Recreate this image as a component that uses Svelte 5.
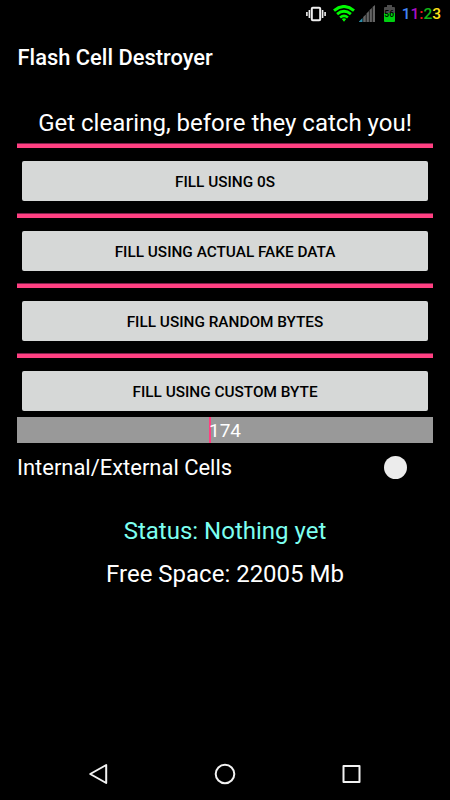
<script lang="ts">
	const modes = ['Fill using 0s', 'Fill using actual fake data', 'Fill using random bytes', 'Fill using custom byte'];

	const clock = [
		{ char: '1', color: '#4285f4' },
		{ char: '1', color: '#a80fc4' },
		{ char: ':', color: '#f01818' },
		{ char: '2', color: '#12b318' },
		{ char: '3', color: '#ffe21a' },
	];

	let customByte = $state(174);
	let external = $state(true);
	let status = $state('Nothing yet');
	let freeSpace = $state(22005);
</script>

<div class="screen">
	<div class="status-bar">
		<svg class="vibrate" width="20" height="16" viewBox="0 0 20 16" fill="none" stroke="#f0f0f0">
			<rect x="5.8" y="1.8" width="8.4" height="12.4" rx="1" stroke-width="2" />
			<path d="M3.4 4v8M16.6 4v8" stroke-width="1.6" />
			<path d="M.9 6v4M19.1 6v4" stroke-width="1.6" />
		</svg>
		<svg class="wifi" width="22" height="17" viewBox="0 0 22 17" fill="none" stroke="#00fa00" stroke-width="3">
			<path d="M1 5.6Q11-2.6 21 5.6" />
			<path d="M4.1 9.1Q11 3.4 17.9 9.1" />
			<path d="M7.1 12.5Q11 9.2 14.9 12.5" stroke-width="2.6" />
			<path d="M8.8 14Q11 12.4 13.2 14L11 16.8z" fill="#00fa00" stroke="none" />
		</svg>
		<svg class="signal" width="16" height="17" viewBox="0 0 16 17">
			<path d="M0 17v-.5L3.5 13V17z" fill="#2d8ca8" />
			<path d="M4.2 17v-5L6.8 9.5V17zM7.5 17V8.5L9.9 6v11zM10.6 17V5L12.9 3v14zM13.6 17V2L16 0v17z" fill="#646464" />
		</svg>
		<span class="battery">
			<svg width="11" height="17" viewBox="0 0 11 17">
				<path d="M3 0h5v2h2q1 0 1 1v5H0V3q0-1 1-1h2z" fill="#4d4d4d" />
				<path d="M0 8h11v8q0 1-1 1H1q-1 0-1-1z" fill="#00d010" />
			</svg>
			<span class="level">56</span>
		</span>
		<span class="clock">
			{#each clock as { char, color }}<span style:color>{char}</span>{/each}
		</span>
	</div>

	<header>Flash Cell Destroyer</header>

	<main>
		<h1>Get clearing, before they catch you!</h1>

		{#each modes as mode}
			<div class="divider"></div>
			<button class="fill">{mode}</button>
		{/each}

		<div class="byte-picker">
			<span class="cursor"></span>
			<span>{customByte}</span>
		</div>

		<div class="switch-row">
			<span>Internal/External Cells</span>
			<button class="switch" role="switch" aria-checked={external} aria-label="Internal/External Cells" onclick={() => (external = !external)}>
				<span class="thumb"></span>
			</button>
		</div>

		<p class="status">Status: {status}</p>
		<p class="space">Free Space: {freeSpace} Mb</p>
	</main>

	<nav>
		<svg width="22" height="22" viewBox="0 0 22 22">
			<path d="M18.2 2v18L2.2 11z" />
		</svg>
		<svg width="22" height="22" viewBox="0 0 22 22">
			<circle cx="11" cy="11" r="9.3" />
		</svg>
		<svg width="22" height="22" viewBox="0 0 22 22">
			<rect x="3.5" y="3" width="16" height="16" />
		</svg>
	</nav>
</div>

<style>
	:global(body) {
		background: #000;
	}

	.screen {
		display: flex;
		flex-direction: column;
		width: 450px;
		height: 800px;
		overflow: hidden;
		background: #000;
		color: #fff;
		font-family: Roboto, 'Liberation Sans', sans-serif;
	}

	.status-bar {
		display: flex;
		align-items: center;
		justify-content: flex-end;
		height: 27px;
		padding-right: 9px;
	}
	.wifi {
		margin-left: 7px;
	}
	.signal {
		margin-left: 4px;
	}
	.battery {
		position: relative;
		width: 11px;
		height: 17px;
		margin-left: 9px;
	}
	.battery svg {
		display: block;
	}
	.level {
		position: absolute;
		inset: 5px 0 auto;
		text-align: center;
		font-size: 8.5px;
		font-weight: 500;
		line-height: 9px;
		color: #000;
	}
	.clock {
		margin-left: 7px;
		font-size: 15.5px;
		font-weight: 500;
		line-height: 28px;
	}

	header {
		height: 61px;
		padding-left: 17.5px;
		font-size: 21.9px;
		font-weight: 500;
		line-height: 62px;
	}

	main {
		display: flex;
		flex: 1;
		flex-direction: column;
		padding: 18px 17px 0;
	}
	h1 {
		height: 37px;
		margin: 0;
		text-align: center;
		font-size: 24px;
		font-weight: 400;
		line-height: 34px;
	}

	.divider {
		height: 4px;
		border-top: 1px solid #80204a;
		background: #ff4081;
	}
	.fill {
		height: 40px;
		margin: 13px 5px 12px;
		padding: 0;
		border: 0;
		border-radius: 2px;
		background: #d6d8d7;
		color: #000;
		font: 500 15.35px/42px Roboto, 'Liberation Sans', sans-serif;
		text-transform: uppercase;
	}

	.byte-picker {
		display: flex;
		height: 26px;
		margin-top: -6px;
		padding-left: 192px;
		background: #999;
		font-size: 19px;
		line-height: 27px;
	}
	.cursor {
		width: 2px;
		margin-right: -2px;
		background: #ff4081;
	}

	.switch-row {
		display: flex;
		align-items: center;
		justify-content: space-between;
		height: 49px;
		font-size: 21.95px;
	}
	.switch {
		display: flex;
		justify-content: flex-start;
		width: 49px;
		padding: 0;
		border: 0;
		background: none;
	}
	.thumb {
		width: 23px;
		height: 23px;
		border-radius: 50%;
		background: #ececec;
	}

	p {
		margin: 0;
		text-align: center;
		font-size: 24px;
		line-height: 28px;
	}
	.status {
		margin-top: 25px;
		color: #7dfff0;
	}
	.space {
		margin-top: 15px;
	}

	nav {
		display: flex;
		align-items: center;
		justify-content: space-between;
		height: 52px;
		padding: 0 88px;
	}
	nav svg {
		fill: none;
		stroke: #f2f2f2;
		stroke-width: 2;
		stroke-linejoin: round;
	}
</style>
